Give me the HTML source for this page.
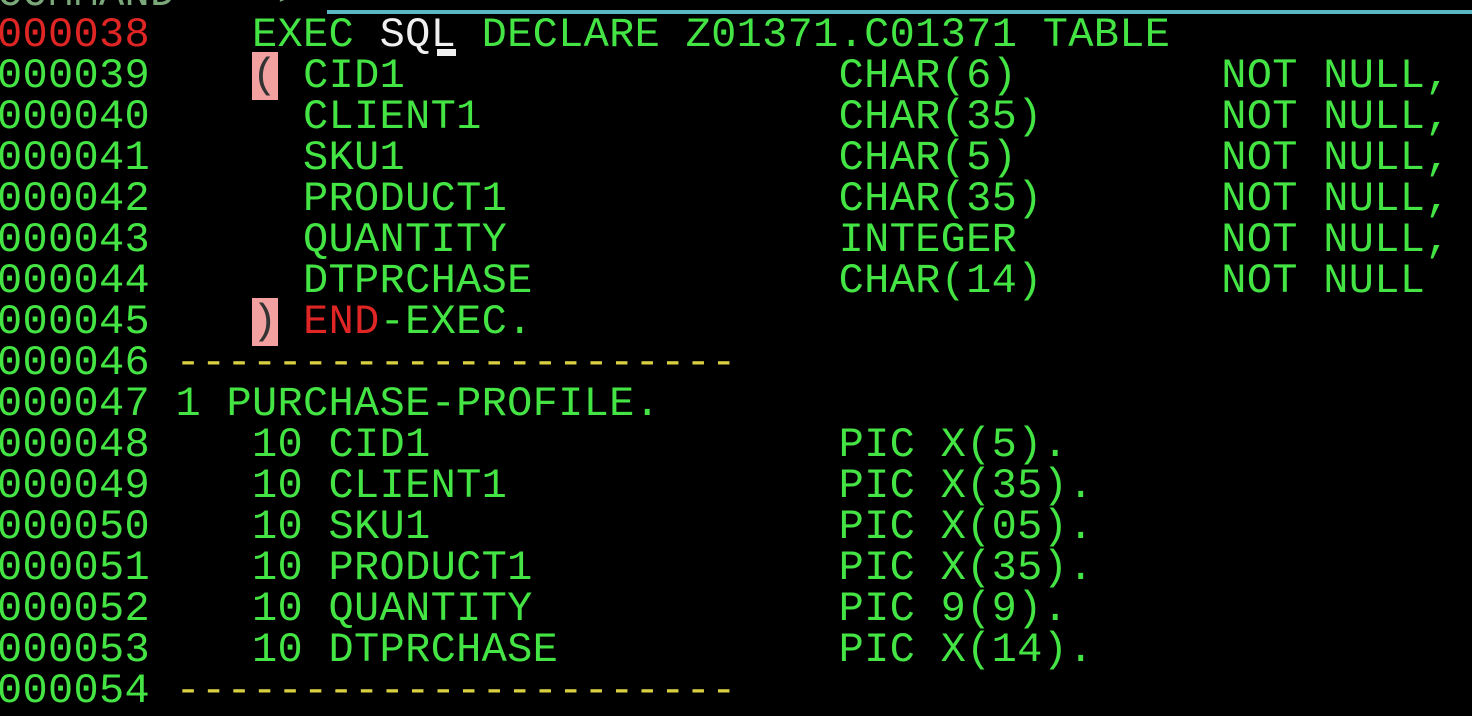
<!DOCTYPE html>
<html><head><meta charset="utf-8"><style>
html,body{margin:0;padding:0;background:#fff;}
#scr{position:absolute;left:0;top:0;width:1472px;height:716px;background:#000;overflow:hidden;}
#teal{position:absolute;left:327px;top:10px;width:1145px;height:4px;background:#5ab8c2;}
pre{position:absolute;left:-3px;top:-26px;margin:0;font-family:"Liberation Mono",monospace;font-size:42px;line-height:41px;letter-spacing:0.3px;color:#44e444;white-space:pre;}
.r{color:#e02525}.w{color:#f0f0f0}.y{color:#d8d040}
.p{background:#f2a0a0;color:#333}
.c{position:relative}
.c:after{content:"";position:absolute;left:6px;right:0px;bottom:3px;height:7px;background:#f0f0f0}
.cm{color:#7aa87a}
</style></head><body><div id="scr"><div id="teal"></div>
<pre><span class="cm">COMMAND ===></span>
<span class="r">000038</span>    EXEC <span class="w">SQ<span class="c">L</span></span> DECLARE Z01371.C01371 TABLE
000039    <span class="p">(</span> CID1                 CHAR(6)        NOT NULL,
000040      CLIENT1              CHAR(35)       NOT NULL,
000041      SKU1                 CHAR(5)        NOT NULL,
000042      PRODUCT1             CHAR(35)       NOT NULL,
000043      QUANTITY             INTEGER        NOT NULL,
000044      DTPRCHASE            CHAR(14)       NOT NULL
000045    <span class="p">)</span> <span class="r">END</span>-EXEC.
000046 <span class="y">----------------------</span>
000047 1 PURCHASE-PROFILE.
000048    10 CID1                PIC X(5).
000049    10 CLIENT1             PIC X(35).
000050    10 SKU1                PIC X(05).
000051    10 PRODUCT1            PIC X(35).
000052    10 QUANTITY            PIC 9(9).
000053    10 DTPRCHASE           PIC X(14).
000054 <span class="y">----------------------</span></pre>
</div></body></html>
